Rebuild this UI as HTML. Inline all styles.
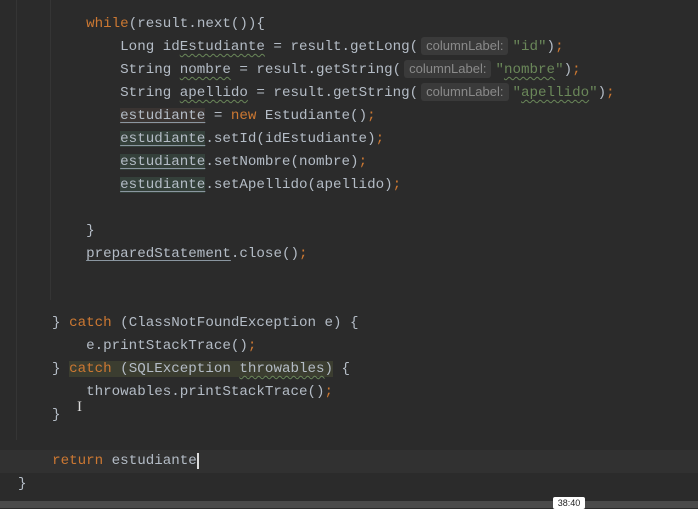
<!DOCTYPE html>
<html><head><style>
html,body{margin:0;padding:0;}
body{width:698px;height:508px;background:#2b2b2b;position:relative;overflow:hidden;font-family:"Liberation Mono",monospace;font-size:14.2px;color:#b4bcc6;}
.l{position:absolute;left:18px;height:23px;line-height:23px;white-space:pre;}
.k{color:#cc7832}
.s{color:#6a8759}
.h{display:inline-block;vertical-align:top;margin-top:1px;line-height:18px;height:18px;font-family:"Liberation Sans",sans-serif;font-size:13px;color:#8a8a8a;background:#3a3a3a;padding:0 5px;border-radius:3px;margin-left:3px;margin-right:4px;}
.u{text-decoration:underline wavy #6a8759;text-decoration-thickness:1px;text-underline-offset:3px}
.v{text-decoration:underline;text-decoration-color:#8a96a0;text-underline-offset:3px}
.g{background:#34403a}
.guide{position:absolute;top:0;width:1px;background:#353535;}
</style></head><body>
<div class="guide" style="left:16px;height:440px"></div>
<div class="guide" style="left:50px;height:300px"></div>
<div style="position:absolute;left:0;top:450px;width:698px;height:23px;background:#313131"></div>
<div class="l" style="top:13px">        <span class="k">while</span>(result.next()){</div>
<div class="l" style="top:36px">            Long id<span class="u">Estudiante</span> = result.getLong(<span class="h">columnLabel:</span><span class="s">"id"</span>)<span class="k">;</span></div>
<div class="l" style="top:59px">            String <span class="u">nombre</span> = result.getString(<span class="h">columnLabel:</span><span class="s">"<span class="u">nombre</span>"</span>)<span class="k">;</span></div>
<div class="l" style="top:82px">            String <span class="u">apellido</span> = result.getString(<span class="h">columnLabel:</span><span class="s">"<span class="u">apellido</span>"</span>)<span class="k">;</span></div>
<div class="l" style="top:105px">            <span class="v" style="background:#3a3432">estudiante</span> = <span class="k">new</span> Estudiante()<span class="k">;</span></div>
<div class="l" style="top:128px">            <span class="v g">estudiante</span>.setId(idEstudiante)<span class="k">;</span></div>
<div class="l" style="top:151px">            <span class="v g">estudiante</span>.setNombre(nombre)<span class="k">;</span></div>
<div class="l" style="top:174px">            <span class="v g">estudiante</span>.setApellido(apellido)<span class="k">;</span></div>
<div class="l" style="top:220px">        }</div>
<div class="l" style="top:243px">        <span class="v">preparedStatement</span>.close()<span class="k">;</span></div>
<div class="l" style="top:312px">    } <span class="k">catch</span> (ClassNotFoundException e) {</div>
<div class="l" style="top:335px">        e.printStackTrace()<span class="k">;</span></div>
<div class="l" style="top:358px">    } <span style="background:#3b3d30"><span class="k">catch</span> (SQLException <span class="u">throwables</span>)</span> {</div>
<div class="l" style="top:381px">        throwables.printStackTrace()<span class="k">;</span></div>
<div class="l" style="top:404px">    }</div>
<div style="position:absolute;left:77px;top:399px;color:#ddd;font-size:15px;font-family:'Liberation Serif',serif">I</div>
<div class="l" style="top:450px">    <span class="k">return</span> estudiante<span style="border-left:2px solid #ddd"></span></div>
<div class="l" style="top:473px">}</div>
<div style="position:absolute;left:0;top:501px;width:698px;height:7px;background:#4a4a4a"></div>
<div style="position:absolute;left:553px;top:497px;width:32px;height:12px;background:#fff;border-radius:2px;color:#222;font-family:'Liberation Sans',sans-serif;font-size:9px;line-height:12px;text-align:center">38:40</div>
</body></html>
